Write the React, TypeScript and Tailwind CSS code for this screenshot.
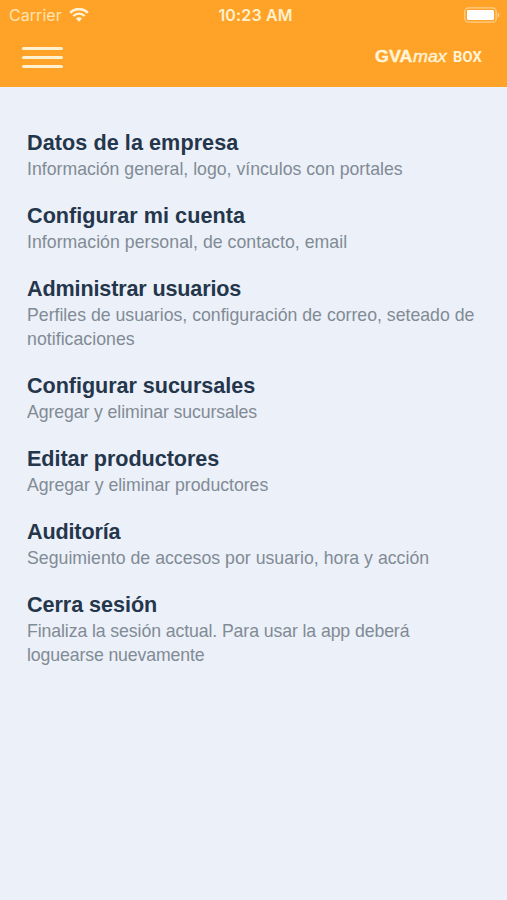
const items = [
  {
    title: "Datos de la empresa",
    titleTracking: "tracking-[0.07px]",
    lines: [{ text: "Información general, logo, vínculos con portales", tracking: "tracking-[0px]" }],
  },
  {
    title: "Configurar mi cuenta",
    titleTracking: "tracking-[0.04px]",
    lines: [{ text: "Información personal, de contacto, email", tracking: "tracking-[0.04px]" }],
  },
  {
    title: "Administrar usuarios",
    titleTracking: "tracking-[-0.15px]",
    lines: [
      { text: "Perfiles de usuarios, configuración de correo, seteado de", tracking: "tracking-[0px]" },
      { text: "notificaciones", tracking: "tracking-[0.04px]" },
    ],
  },
  {
    title: "Configurar sucursales",
    titleTracking: "tracking-[-0.05px]",
    lines: [{ text: "Agregar y eliminar sucursales", tracking: "tracking-[-0.1px]" }],
  },
  {
    title: "Editar productores",
    titleTracking: "tracking-[-0.05px]",
    lines: [{ text: "Agregar y eliminar productores", tracking: "tracking-[-0.02px]" }],
  },
  {
    title: "Auditoría",
    titleTracking: "tracking-[-0.15px]",
    lines: [{ text: "Seguimiento de accesos por usuario, hora y acción", tracking: "tracking-[0.02px]" }],
  },
  {
    title: "Cerra sesión",
    titleTracking: "tracking-[-0.05px]",
    lines: [
      { text: "Finaliza la sesión actual. Para usar la app deberá", tracking: "tracking-[-0.1px]" },
      { text: "loguearse nuevamente", tracking: "tracking-[-0.12px]" },
    ],
  },
];

function WifiIcon() {
  return (
    <svg width="20" height="14" viewBox="0 0 20 14" fill="none" stroke="#fff3d6">
      <path d="M1.2 4.7C6.1-.1 13.9-.1 18.8 4.7" strokeWidth="2.6" />
      <path d="M4.3 8C7.6 4.8 12.4 4.8 15.7 8" strokeWidth="2.4" />
      <path d="M10 13.8 6.9 10.5C8.7 8.9 11.3 8.9 13.1 10.5Z" fill="#fff3d6" stroke="none" />
    </svg>
  );
}

function BatteryIcon() {
  return (
    <svg width="36" height="17" viewBox="0 0 36 17">
      <rect x="0.8" y="0.8" width="31.4" height="14.4" rx="3.8" fill="none" stroke="#ffce8a" strokeWidth="1.3" />
      <rect x="3" y="3" width="27" height="10" rx="1.2" fill="#ffffff" />
      <path d="M33.7 5.2C35.9 6.2 35.9 9.8 33.7 10.8Z" fill="#ffce8a" />
    </svg>
  );
}

export default function App() {
  return (
    <div className="flex h-[900px] w-[507px] flex-col overflow-hidden bg-[#ecf0f8] font-['Liberation_Sans',Arial,sans-serif]">
      <header className="h-[87px] shrink-0 bg-[#ffa328]">
        <div className="grid h-[29px] grid-cols-3 items-center font-['Inter',sans-serif] text-[#fff0cf]">
          <div className="flex items-center gap-[7px] pl-[9px]">
            <span className="pt-px text-[16px] leading-[29px] tracking-[0.05px] text-[#ffe3b0]">Carrier</span>
            <WifiIcon />
          </div>
          <span className="whitespace-nowrap pl-[4px] pt-px text-center text-[16px] font-semibold leading-[29px] tracking-[0.15px]">
            10:23 AM
          </span>
          <div className="flex justify-end pr-[7px]">
            <BatteryIcon />
          </div>
        </div>
        <div className="flex h-[56px] items-center justify-between pl-[22px] pr-[25px]">
          <button aria-label="Menu" className="flex w-[41px] flex-col gap-[6px]">
            <span className="h-[3px] rounded-full bg-[#fff0d0]" />
            <span className="h-[3px] rounded-full bg-[#fff0d0]" />
            <span className="h-[3px] rounded-full bg-[#fff0d0]" />
          </button>
          <div className="flex items-baseline whitespace-nowrap leading-[20px] text-[#fff3d8]">
            <span className="w-[38px] origin-left scale-x-[1.14] text-[15.7px] font-bold [-webkit-text-stroke:0.4px_#fff3d8]">
              GVA
            </span>
            <span className="w-[34px] origin-left scale-x-[1.14] text-[15.7px] italic [-webkit-text-stroke:0.4px_#fff3d8]">
              max
            </span>
            <span className="ml-[6px] w-[29px] origin-left scale-x-[0.95] font-['Roboto',sans-serif] text-[15.5px] font-bold">
              BOX
            </span>
          </div>
        </div>
      </header>
      <main className="flex flex-col gap-[22.3px] pl-[27px] pt-[44px]">
        {items.map((item) => (
          <section key={item.title} className="whitespace-nowrap">
            <h2 className={`mb-[2px] text-[21.6px] font-bold leading-[24.3px] text-[#24364b] ${item.titleTracking}`}>
              {item.title}
            </h2>
            {item.lines.map((line) => (
              <p key={line.text} className={`text-[17.7px] leading-[24.3px] text-[#818b95] ${line.tracking}`}>
                {line.text}
              </p>
            ))}
          </section>
        ))}
      </main>
    </div>
  );
}
